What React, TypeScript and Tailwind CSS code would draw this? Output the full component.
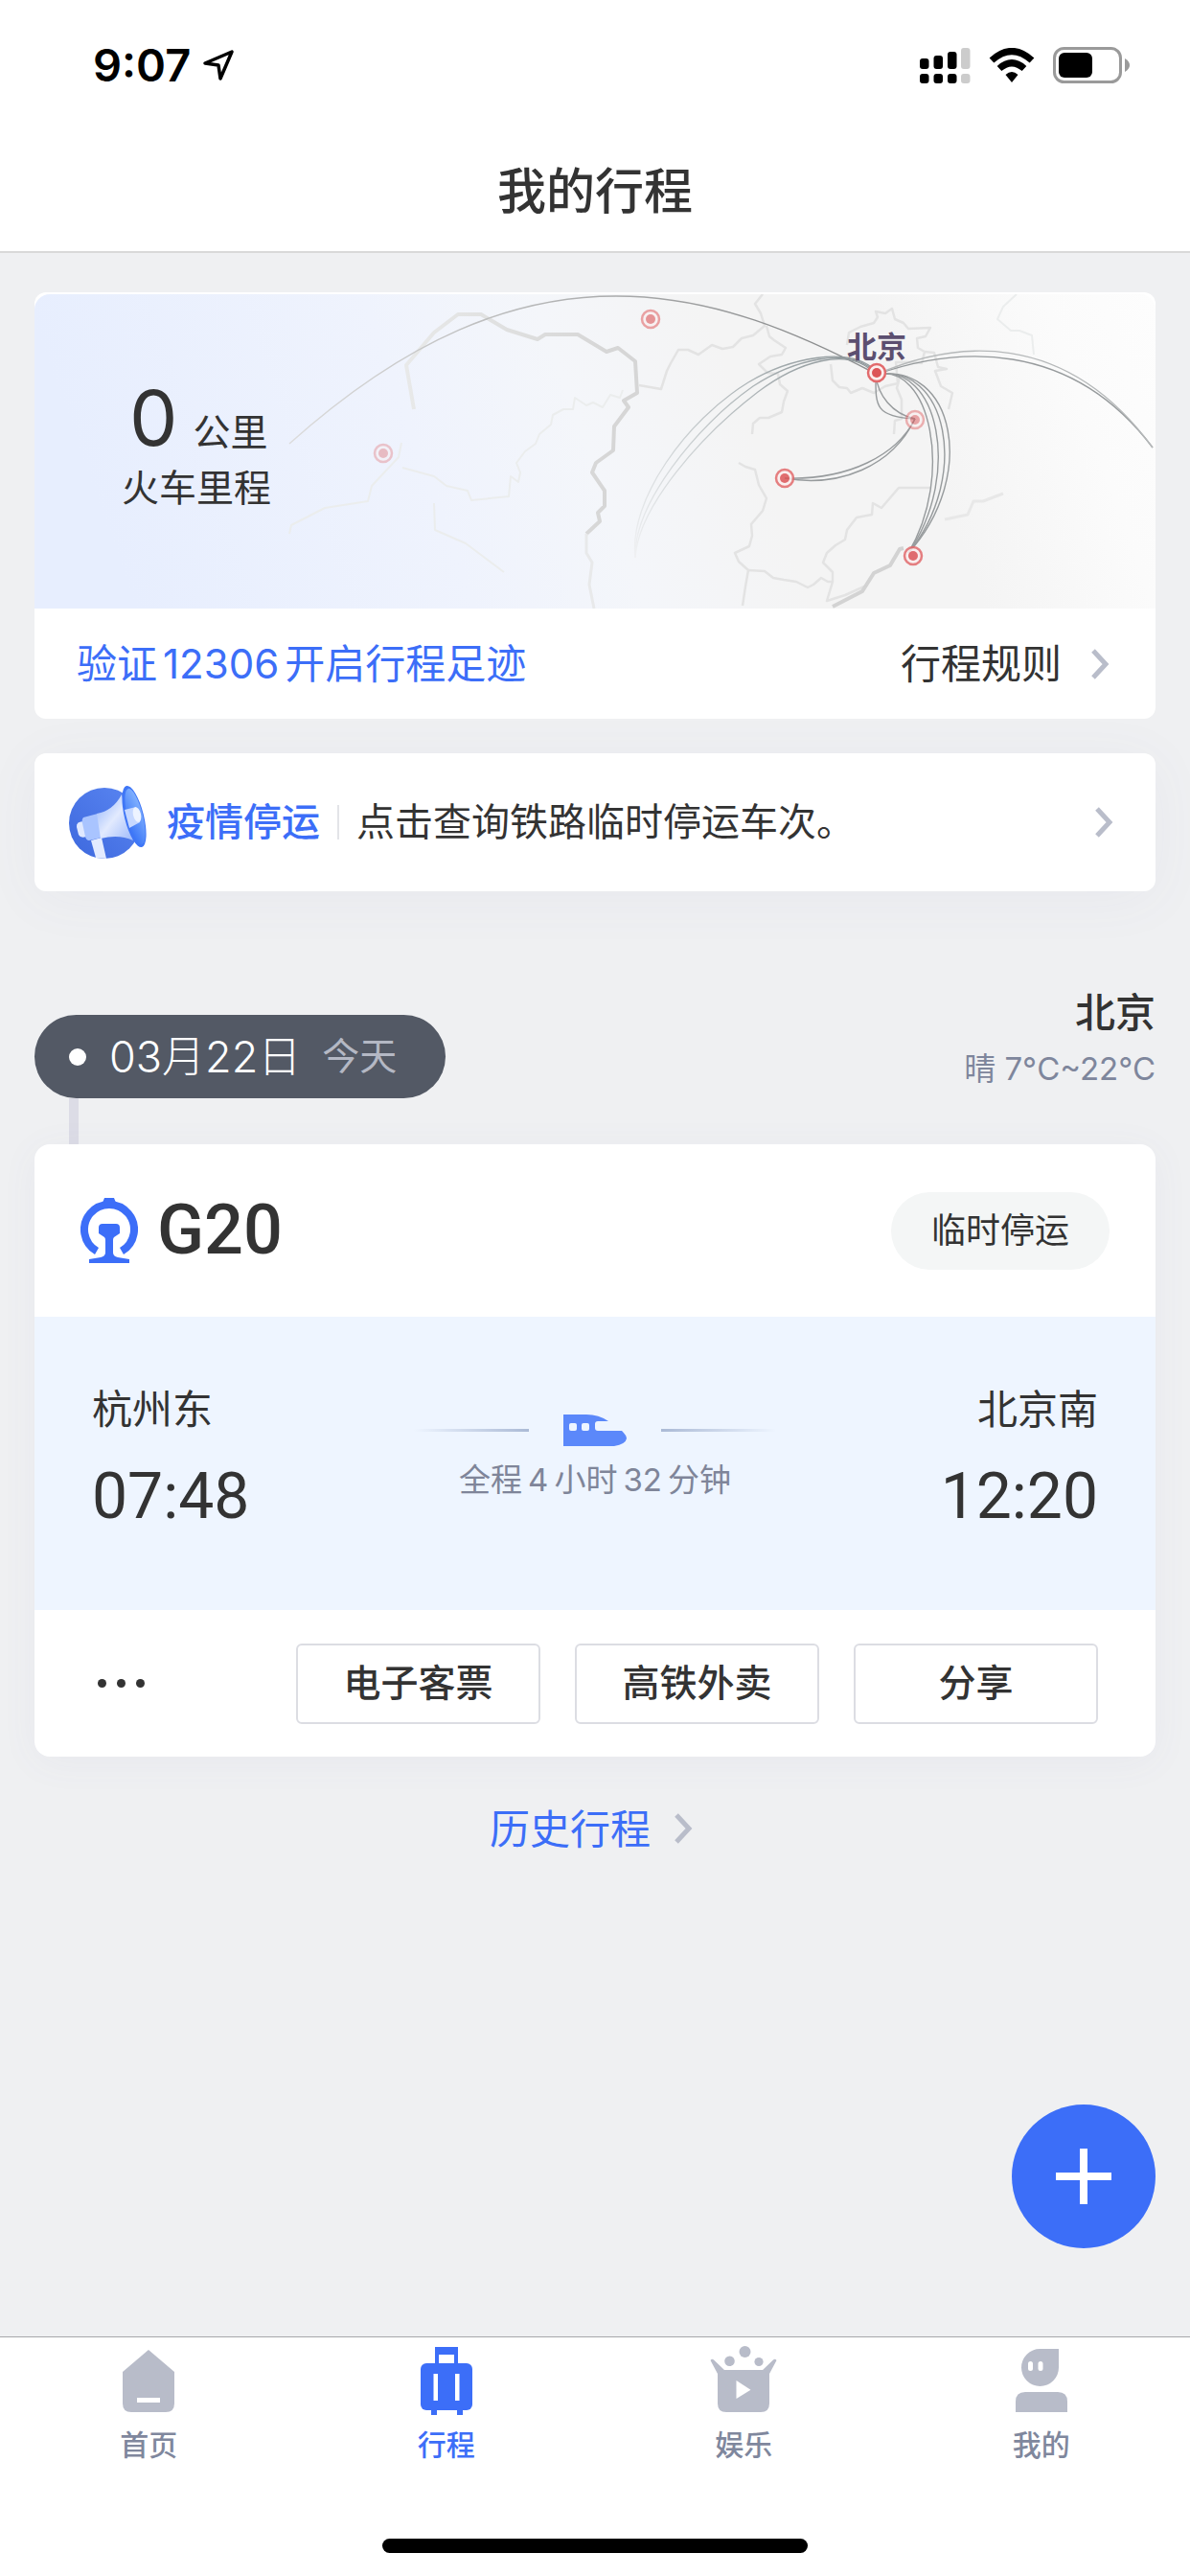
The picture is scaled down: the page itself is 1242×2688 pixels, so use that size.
import type { ReactNode } from "react";

interface Tab {
  label: string;
  icon: ReactNode;
  active?: boolean;
}

const landLines = [
  "M631 95 654 99 660 80 664 72 672 58 682 58 693 63 707 53 718 57 729 55 738 46 750 43 762 33 758 20 752 10 760 0",
  "M764 33 767 44 772 48 784 56 780 63 768 65 756 73 765 82 776 83 778 94 786 101 782 112 780 123 766 129 757 129 750 135 749 146",
  "M735 176 742 180 752 183 756 199 764 213 760 226 748 240 749 252 746 263 731 270 735 279 745 288 742 305 739 325",
  "M745 288 762 289 771 296 782 298 795 300 807 306 813 303 821 296 828 300 833 300 833 290 823 280 827 270 836 262 846 256 848 246 858 233 874 230 875 218 884 223 902 202 935 202",
  "M833 300 827 320 846 314 866 305",
  "M848 53 850 40 862 34 876 30 880 24 878 18 888 20 895 15 898 26 907 30 912 36 935 35 930 44 921 46 922 56 929 60 926 72 917 71 899 71 901 93 888 96 876 103 864 98 852 103 848 98 840 97 833 90 831 73",
  "M929 60 939 61 943 76 952 78 940 80 946 96 958 103 954 120",
  "M903 86 900 98 905 110 905 130 898 132 897 146",
];

const paleLines = [
  "M266 250 268 241 303 223 348 216 352 200 380 170 383 155",
  "M384 181 417 190 430 200 452 205 456 215 495 211 497 190 505 196 507 186 503 176 512 164 523 156 527 146 539 136 541 126 552 120 562 120 564 108 576 116 583 113 593 118 601 105 611 108 614 100",
  "M417 218 418 246 450 260 470 275 490 290",
  "M1025 0 1011 13 1005 26 1019 38 1028 38 1041 43 1043 63",
];

const pins = [
  { x: 643, y: 26, opacity: 0.6 },
  { x: 879, y: 82, opacity: 1 },
  { x: 919, y: 131, opacity: 0.5 },
  { x: 783, y: 192, opacity: 0.85 },
  { x: 917, y: 273, opacity: 0.85 },
  { x: 364, y: 166, opacity: 0.35 },
];

function RouteMap() {
  return (
    <svg viewBox="0 0 1170 328" preserveAspectRatio="xMidYMid slice" className="absolute inset-0 h-full w-full" aria-hidden="true">
      <defs>
        <linearGradient id="mapBase" x1="0" y1="0.1" x2="1" y2="0">
          <stop offset="0" stopColor="#e7eefe" />
          <stop offset="0.3" stopColor="#eff3fd" />
          <stop offset="0.45" stopColor="#f4f6fa" />
          <stop offset="0.6" stopColor="#f4f4f4" />
          <stop offset="0.75" stopColor="#f4f4f4" />
          <stop offset="0.9" stopColor="#fbfbfb" />
          <stop offset="1" stopColor="#fdfdfd" />
        </linearGradient>
        <linearGradient id="arcFade" gradientUnits="userSpaceOnUse" x1="266" y1="0" x2="800" y2="0">
          <stop offset="0" stopColor="#dcdcdc" />
          <stop offset="1" stopColor="#8d8f90" />
        </linearGradient>
        <linearGradient id="fanFade" gradientUnits="userSpaceOnUse" x1="850" y1="70" x2="625" y2="280">
          <stop offset="0" stopColor="#8f989b" />
          <stop offset="0.6" stopColor="#cdd2d4" />
          <stop offset="1" stopColor="#f1f2f4" />
        </linearGradient>
        <linearGradient id="borderFade" gradientUnits="userSpaceOnUse" x1="388" y1="0" x2="600" y2="0">
          <stop offset="0" stopColor="#e8e9e9" />
          <stop offset="1" stopColor="#d6d6d6" />
        </linearGradient>
      </defs>
      <rect width="1170" height="328" fill="url(#mapBase)" />
      <g fill="none" strokeLinejoin="round">
        <g stroke="#ebeded" strokeWidth="2">
          {paleLines.map((d) => (
            <path key={d} d={d} />
          ))}
        </g>
        <g stroke="#e3e3e3" strokeWidth="2.5">
          {landLines.map((d) => (
            <path key={d} d={d} />
          ))}
        </g>
        <path
          d="M396 120 388 74 417 40 442 21 466 21 493 37 525 47 533 42 567 42 597 60 609 56 627 70 629 103 615 111 620 118 605 138 604 163 586 176 582 186 595 205 595 221 588 228 590 237 576 250"
          stroke="url(#borderFade)"
          strokeWidth="4"
        />
        <path d="M576 250 576 270 582 280 579 303 584 328" stroke="#e8e9ea" strokeWidth="3" />
        <path d="M833 326 864 310 876 291 893 283 903 266 907 265" stroke="#d3d3d3" strokeWidth="4" />
        <path d="M950 235 974 230 980 216 990 216 1011 208" stroke="#e8e8e8" strokeWidth="3" />
        <path d="M266 156 C390 45 500 2 607 2 C710 2 800 42 878 83" stroke="url(#arcFade)" strokeWidth="1.5" />
        <g stroke="url(#fanFade)" strokeWidth="1.3">
          <path d="M878 80 C850 52 785 68 745 92 C680 132 620 215 627 275" />
          <path d="M878 82 C850 52 790 70 750 96 C690 138 625 220 627 275" />
          <path d="M878 84 C850 52 795 72 755 102 C695 148 630 222 627 275" />
        </g>
        <g stroke="#979b9d" strokeWidth="1.4">
          <path d="M878 84 C960 55 1080 45 1167 160" />
          <path d="M878 84 C960 48 1075 35 1167 160" stroke="#b6b9ba" />
          <path d="M878 84 C960 70 985 190 912 270" />
          <path d="M878 84 C952 70 978 190 912 270" />
          <path d="M878 84 C944 70 968 190 912 270" />
          <path d="M878 84 C935 70 960 190 912 270" />
          <path d="M878 84 C878 115 876 128 919 130" />
          <path d="M878 84 C880 105 895 125 919 130" />
          <path d="M919 130 C895 180 840 202 783 192" />
          <path d="M919 130 C900 168 850 194 783 192" />
        </g>
      </g>
      {pins.map((pin) => (
        <g key={`${pin.x}-${pin.y}`} opacity={pin.opacity}>
          <circle cx={pin.x} cy={pin.y} r="9" fill="#fbeeee" stroke="#e26a6c" strokeWidth="2.5" />
          <circle cx={pin.x} cy={pin.y} r="5" fill="#dc5558" />
        </g>
      ))}
      <text x="848" y="66" fontSize="31" fill="#5c4f70" className="font-['Noto_Sans_CJK_SC',sans-serif] font-bold">
        北京
      </text>
    </svg>
  );
}

function Chevron() {
  return (
    <svg viewBox="0 0 20 32" className="h-8 w-5 shrink-0" fill="none" stroke="#b9bdca" strokeWidth="5" aria-hidden="true">
      <path d="M3 2 16 16 3 30" />
    </svg>
  );
}

function Megaphone() {
  return (
    <svg viewBox="0 0 82 78" className="h-[78px] w-[82px] shrink-0" aria-hidden="true">
      <defs>
        <linearGradient id="disc" x1="1" y1="0" x2="0" y2="1">
          <stop offset="0" stopColor="#5a86f2" />
          <stop offset="1" stopColor="#3d68dd" />
        </linearGradient>
        <linearGradient id="horn" x1="0" y1="0" x2="1" y2="1">
          <stop offset="0" stopColor="#8fb2fb" />
          <stop offset="0.5" stopColor="#e2eafe" />
          <stop offset="1" stopColor="#9db9fb" />
        </linearGradient>
        <linearGradient id="mouth" x1="0" y1="1" x2="1" y2="0">
          <stop offset="0" stopColor="#2f6cf6" />
          <stop offset="1" stopColor="#8ebcff" />
        </linearGradient>
      </defs>
      <circle cx="37" cy="40" r="37" fill="url(#disc)" />
      <path d="M23 58 34 55 39 77 28 76Z" fill="#e3ebff" />
      <path d="M16 38 Q7 38 8 44 L10 52 Q12 56 18 54Z" fill="#e0e9ff" />
      <path d="M15 34 30 30 34 55 21 58Q18 58 17 54L14 40Q13 36 15 34Z" fill="#a9c4ff" />
      <path d="M29 30 Q46 27 55 10 L67 58 Q52 51 33 56Z" fill="url(#horn)" />
      <ellipse cx="68" cy="33" rx="10" ry="33" transform="rotate(-14 68 33)" fill="#3f76f6" />
      <ellipse cx="69" cy="33" rx="8" ry="30" transform="rotate(-14 69 33)" fill="url(#mouth)" />
      <path d="M58 26 70 23 Q76 30 74 39 L63 45Z" fill="#c6d8ff" />
      <ellipse cx="71" cy="31" rx="4" ry="8" transform="rotate(-14 71 31)" fill="#edf3ff" />
    </svg>
  );
}

function RailwayLogo() {
  return (
    <svg viewBox="0 0 60 68" className="h-[68px] w-[60px]" fill="#3c6ef8" aria-hidden="true">
      <path d="M17 55.5 A26 26 0 1 1 43 55.5" fill="none" stroke="#3c6ef8" strokeWidth="8" />
      <path d="M25 0H35L37 5H23Z" />
      <path d="M23 27H37Q41 27 41 31V37L35 41Q34 42 34 44V57Q34 61 39 62L51 64V68H9V64L21 62Q26 61 26 57V44Q26 42 25 41L19 37V31Q19 27 23 27Z" />
    </svg>
  );
}

function StatusBar() {
  return (
    <div className="flex h-[134px] items-center justify-between pt-[2px] pr-[63px] pl-[97px]">
      <div className="flex items-center gap-3 text-black">
        <span className="text-[47px] leading-[60px] font-semibold">9:07</span>
        <svg viewBox="0 0 34 34" className="h-[34px] w-[34px]" fill="none" stroke="#000" strokeWidth="3.5" strokeLinejoin="round" aria-hidden="true">
          <path d="M3 15 31 3 19 31 17 17Z" />
        </svg>
      </div>
      <div className="flex items-center gap-[19px]">
        <svg viewBox="0 0 53 37" className="h-[37px] w-[53px]" aria-hidden="true">
          <rect x="0" y="11" width="9.5" height="11" rx="3" />
          <rect x="14.5" y="8" width="9.5" height="14" rx="3" />
          <rect x="29" y="4" width="9.5" height="18" rx="3" />
          <rect x="43" y="0" width="9.5" height="22" rx="3" fill="#ccc" />
          <rect x="0" y="27" width="9.5" height="10" rx="3" />
          <rect x="14.5" y="27" width="9.5" height="10" rx="3" />
          <rect x="29" y="27" width="9.5" height="10" rx="3" />
          <rect x="43" y="27" width="9.5" height="10" rx="3" fill="#ccc" />
        </svg>
        <svg viewBox="0 0 48 36" className="h-9 w-12" fill="none" stroke="#000" strokeWidth="7" aria-hidden="true">
          <path d="M3 13 Q24 -6 45 13" />
          <path d="M11 21.5 Q24 10 37 21.5" />
          <path d="M24 36 17.5 28 Q24 22 30.5 28Z" fill="#000" stroke="none" />
        </svg>
        <svg viewBox="0 0 80 38" className="h-[38px] w-20" aria-hidden="true">
          <rect x="1.5" y="1.5" width="69" height="35" rx="10" fill="none" stroke="#9a9a9a" strokeWidth="3" />
          <rect x="6" y="6" width="35" height="26" rx="6" />
          <path d="M75 12 Q80 15 80 19 Q80 23 75 26Z" fill="#9a9a9a" />
        </svg>
      </div>
    </div>
  );
}

const tabs: Tab[] = [
  {
    label: "首页",
    icon: (
      <>
        <path d="M36 6 63 29V62Q63 71 54 71H18Q9 71 9 62V29Z" />
        <rect x="24" y="56" width="24" height="5" fill="#fff" />
      </>
    ),
  },
  {
    label: "行程",
    active: true,
    icon: (
      <>
        <path d="M24 3H48V21H44V11H28V21H24Z" />
        <rect x="9" y="20" width="54" height="49" rx="6" />
        <rect x="20" y="68" width="6" height="6" />
        <rect x="47" y="68" width="6" height="6" />
        <rect x="22.5" y="31" width="4.5" height="28" fill="#fff" />
        <rect x="45" y="31" width="4.5" height="28" fill="#fff" />
      </>
    ),
  },
  {
    label: "娱乐",
    icon: (
      <>
        <path d="M16 27H56L67 16.5Q69 15 70.5 17L63 31V62Q63 71 54 71H18Q9 71 9 62V31L1.5 17Q3 15 5 16.5Z" />
        <circle cx="37.5" cy="8" r="6" />
        <circle cx="21.5" cy="17.7" r="5.3" />
        <circle cx="52" cy="18.5" r="4.6" />
        <path d="M28.5 38 43.5 47.7 28.5 57Z" fill="#fff" />
      </>
    ),
  },
  {
    label: "我的",
    icon: (
      <>
        <path d="M34.5 5H54V24.5A19.5 19.5 0 1 1 34.5 5Z" />
        <rect x="22" y="18" width="5" height="10" rx="2.5" fill="#fff" />
        <rect x="32.5" y="18" width="5" height="10" rx="2.5" fill="#fff" />
        <path d="M9 71V60Q9 50 19 50H53Q63 50 63 60V71Z" />
      </>
    ),
  },
];

function TabBar() {
  return (
    <footer className="border-t border-[#a6a7aa] bg-white pt-[7px] pb-6">
      <nav className="grid grid-cols-4">
        {tabs.map((tab) => (
          <a
            key={tab.label}
            href="#"
            className={`flex flex-col items-center gap-[9px] text-[30px] leading-10 font-medium ${tab.active ? "text-[#3c6ef8]" : "text-[#7f879d]"}`}
          >
            <svg viewBox="0 0 72 76" className="h-[76px] w-[72px]" fill={tab.active ? "#3c6ef8" : "#b8bcc9"} aria-hidden="true">
              {tab.icon}
            </svg>
            {tab.label}
          </a>
        ))}
      </nav>
      <div className="mx-auto mt-[78px] h-[15px] w-[444px] rounded-full bg-black" />
    </footer>
  );
}

function MileageCard() {
  return (
    <section className="overflow-hidden rounded-xl bg-white pt-[2px]">
      <div className="relative flex h-[328px] items-center overflow-hidden rounded-t-2xl">
        <RouteMap />
        <div className="relative ml-[91px] pb-3">
          <p className="flex items-baseline gap-4 pl-2 text-[39px] leading-[72px]">
            <span className="text-[80px]">0</span>
            公里
          </p>
          <p className="text-[39px] leading-[44px]">火车里程</p>
        </div>
      </div>
      <div className="flex h-[115px] items-center justify-between pr-12 pl-11 text-[42px]">
        <a href="#" className="text-[#3c6ef8]">
          验证<span className="mx-[6px]">12306</span>开启行程足迹
        </a>
        <a href="#" className="flex items-center gap-[30px]">
          行程规则
          <Chevron />
        </a>
      </div>
    </section>
  );
}

function TripCard() {
  return (
    <article className="overflow-hidden rounded-2xl bg-white shadow-[0_6px_40px_rgba(90,90,160,0.05)]">
      <div className="flex h-[180px] items-center justify-between px-12">
        <h2 className="flex items-center gap-5 font-['Roboto',sans-serif] text-[72px] leading-none font-medium">
          <RailwayLogo />
          G20
        </h2>
        <span className="flex h-[81px] items-center rounded-full bg-[#f4f6f6] px-[42px] text-[36px]">临时停运</span>
      </div>

      <div className="grid grid-cols-[1fr_auto_1fr] bg-[#eef5ff] px-[60px] pt-[67px] pb-[73px]">
        <div className="flex flex-col gap-4">
          <span className="text-[42px] leading-[60px]">杭州东</span>
          <time className="font-['Roboto',sans-serif] text-[66px] leading-[90px]">07:48</time>
        </div>
        <div className="flex flex-col items-center gap-[11px] pt-[35px]">
          <div className="flex items-center gap-9">
            <div className="h-[3px] w-[120px] bg-linear-to-l from-[#abbad6] to-[#eef5ff]" />
            <svg viewBox="0 0 66 33" className="h-[33px] w-[66px]" aria-hidden="true">
              <path d="M0 0H24Q37 0 47 7H36Q33 7 33 10V14Q33 17 36 17H61Q66 22 66 25Q65 31 53 33H0Z" fill="#5b88fa" />
              <rect x="6" y="9" width="8" height="8" rx="2" fill="#eef5ff" />
              <rect x="19" y="9" width="8" height="8" rx="2" fill="#eef5ff" />
            </svg>
            <div className="h-[3px] w-[120px] bg-linear-to-r from-[#abbad6] to-[#eef5ff]" />
          </div>
          <span className="text-[33px] leading-[48px] text-[#7f8599]">
            全程<span className="mx-[6px]">4</span>小时<span className="mx-[6px]">32</span>分钟
          </span>
        </div>
        <div className="flex flex-col items-end gap-4">
          <span className="text-[42px] leading-[60px]">北京南</span>
          <time className="font-['Roboto',sans-serif] text-[66px] leading-[90px]">12:20</time>
        </div>
      </div>

      <div className="flex h-[153px] items-center justify-between pr-[60px] pl-[66px]">
        <button type="button" aria-label="更多" className="flex gap-[11px]">
          <i className="size-[9px] rounded-full bg-[#333]" />
          <i className="size-[9px] rounded-full bg-[#333]" />
          <i className="size-[9px] rounded-full bg-[#333]" />
        </button>
        <div className="flex gap-9">
          {["电子客票", "高铁外卖", "分享"].map((action) => (
            <button key={action} type="button" className="h-[84px] w-[255px] rounded-md border-2 border-[#dcdde3] text-[39px] font-medium">
              {action}
            </button>
          ))}
        </div>
      </div>
    </article>
  );
}

export default function App() {
  return (
    <div lang="zh-CN" className="flex min-h-screen flex-col bg-[#eff0f2] font-['Inter','Noto_Sans_CJK_SC',sans-serif] text-[#333]">
      <header className="border-b-2 border-[#d9d9d9] bg-white">
        <StatusBar />
        <h1 className="flex h-32 items-center justify-center pt-1 text-[51px] font-medium">我的行程</h1>
      </header>

      <main className="relative flex-1 px-9 pt-[41px]">
        <MileageCard />

        {/* Suspension notice */}
        <a href="#" className="mt-9 flex h-36 items-center rounded-xl bg-white pr-11 pl-9 text-[40px] shadow-[0_8px_60px_rgba(90,90,160,0.05)]">
          <Megaphone />
          <strong className="ml-5 font-medium text-[#3c6ef8]">疫情停运</strong>
          <span className="mx-[18px] h-9 w-[2px] bg-[#e3e4e8]" />
          <span className="flex-1">点击查询铁路临时停运车次。</span>
          <Chevron />
        </a>

        {/* Date and weather */}
        <div className="mt-[97px] flex items-end justify-between">
          <div className="flex h-[87px] items-center rounded-full bg-[#535965] pr-[51px] pl-9 text-white">
            <span className="size-[18px] rounded-full bg-white" />
            <span className="ml-6 text-[45px] font-light">03月22日</span>
            <span className="ml-[22px] text-[39px] text-[#b4b8c4]">今天</span>
          </div>
          <div className="pb-[2px] text-right">
            <p className="text-[42px] leading-[60px] font-medium">北京</p>
            <p className="text-[33px] leading-[57px] text-[#7e869c]">晴 7°C~22°C</p>
          </div>
        </div>
        <div className="ml-9 h-12 w-[10px] bg-[#dcdce6]" />

        <TripCard />

        <a href="#" className="mx-auto mt-9 flex h-[78px] w-fit items-center gap-6 pr-2 text-[42px] text-[#3c6ef8]">
          历史行程
          <Chevron />
        </a>

        <button type="button" aria-label="添加行程" className="absolute right-9 bottom-[92px] flex size-[150px] items-center justify-center rounded-full bg-[#3c6ef8]">
          <svg viewBox="0 0 58 58" className="size-[58px]" stroke="#fff" strokeWidth="8" aria-hidden="true">
            <path d="M29 0V58M0 29H58" />
          </svg>
        </button>
      </main>

      <TabBar />
    </div>
  );
}
